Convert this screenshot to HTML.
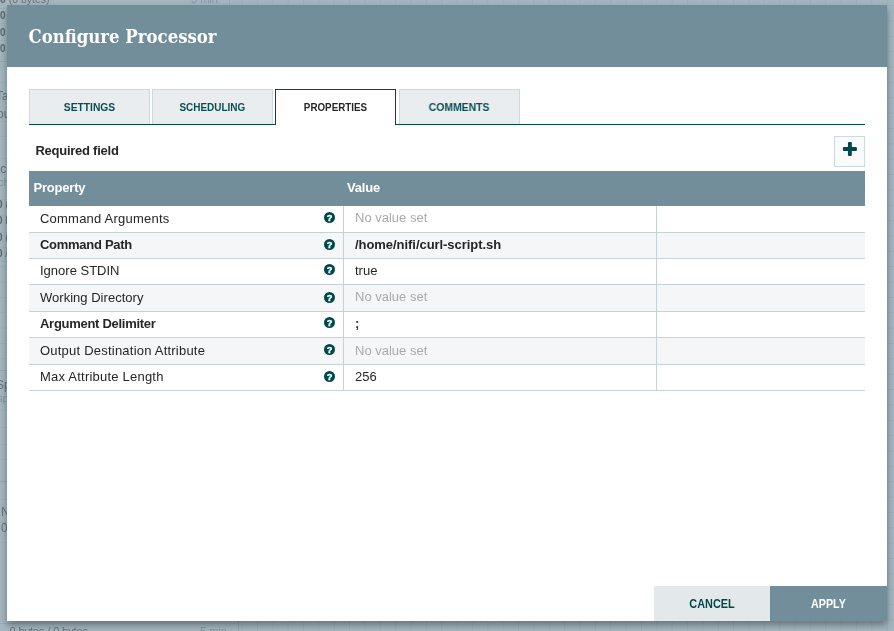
<!DOCTYPE html>
<html lang="en">
<head>
<meta charset="utf-8">
<title>Configure Processor</title>
<style>
*{box-sizing:border-box;margin:0;padding:0}
html,body{width:894px;height:631px;overflow:hidden}
body{position:relative;background:#a3b6bf;font-family:"Liberation Sans",sans-serif;color:#262626;
 background-image:linear-gradient(to right,rgba(100,125,138,.13) 1px,transparent 1px),linear-gradient(to bottom,rgba(100,125,138,.13) 1px,transparent 1px);
 background-size:15.37px 15.37px;background-position:11.2px 5.1px}
.abs{position:absolute}
.pp{will-change:transform;position:absolute;background:#a4b6bf;overflow:hidden}
.pp i{position:absolute;left:0;right:0;height:1px;background:#93a7b1}
.pp span{position:absolute;white-space:nowrap;font-size:10px;line-height:12px;color:#66737b}
.pp b{color:#5b656c}
.pp .lt{color:#8097a3}
#dialog{will-change:transform;left:7px;top:5px;width:880px;height:616px;background:#fff;box-shadow:0 4px 7px rgba(0,0,0,.36)}
#hdr{left:0;top:0;width:880px;height:61.7px;background:#728e9b}
#title{left:21.5px;top:19px;font-family:"DejaVu Serif Condensed","DejaVu Serif","Liberation Serif",serif;font-stretch:condensed;font-weight:bold;font-size:18.4px;line-height:26px;color:#fff;white-space:nowrap}
.tab{top:84.1px;width:121px;height:34.7px;background:#e9edf0;border:1.1px solid #ccdadb;border-bottom:none;color:#0b4e50;font-weight:bold;font-size:11px;line-height:35px;text-align:center;text-transform:uppercase;white-space:nowrap}
.tab span,.btn span{display:inline-block}
.tab.sel{background:#fff;border-color:#004849;color:#262626;height:35.85px}
#tabline{left:22px;top:118.8px;width:836px;height:1.15px;background:#004849}
#req{left:28.4px;top:137.5px;font-weight:bold;font-size:13px;line-height:16px;white-space:nowrap;letter-spacing:-.25px}
#add{left:827.2px;top:131.1px;width:30.7px;height:30.7px;background:#f9fafb;border:1px solid #ccdadb}
#add svg{position:absolute;left:-1px;top:-1px}
#thead{left:22px;top:166px;width:836px;height:35px;background:#728e9b;color:#fff;font-weight:bold;font-size:13px;line-height:35px}
#thead span{position:absolute;top:-1.2px;white-space:nowrap;letter-spacing:-.2px}
.row{left:22px;width:836px;height:26.28px;border-bottom:1.05px solid #c7d2d7;font-size:13px;white-space:nowrap}
.row.alt{background:#f4f6f7}
.row .n{position:absolute;left:11px;top:-.7px;line-height:25px;letter-spacing:.22px}
.row .v{position:absolute;left:326px;top:-.6px;line-height:24px}
.row .v.unset{color:#aaa}
.row .b{font-weight:bold;letter-spacing:-.28px}
.row .v.b{letter-spacing:-.05px}
.row .s1,.row .s2{position:absolute;top:0;bottom:0;width:1px;background:#c7d2d7}
.row .s1{left:314px}.row .s2{left:627px}
.row svg{position:absolute;left:295.05px;top:5.45px}
.btn{top:581px;height:35px;line-height:35px;text-align:center;font-weight:bold;font-size:12px;text-transform:uppercase}
#cancel{left:647px;width:116px;background:#e3e8eb;color:#004849}
#apply{left:763px;width:117px;background:#728e9b;color:#fff}
</style>
</head>
<body>
<div class="pp" style="left:0;top:0;width:230px;height:62px;border-right:1px solid #94a8b2">
  <span style="left:0;top:-7px;font-size:10.5px"><b>0</b> (0 bytes)</span><span class="lt" style="left:191px;top:-7px;font-size:11px">5 min</span>
  <span style="left:0;top:9.5px"><b>0</b></span><span style="left:0;top:26.5px"><b>0</b></span><span style="left:0;top:42.5px"><b>0</b></span>
  <i style="top:7.5px;opacity:.5"></i><i style="top:23px;opacity:.5"></i><i style="top:40px;opacity:.5"></i><i style="top:61px"></i>
</div>
<div class="pp" style="left:0;top:85px;width:8px;height:180px">
  <span style="left:-4px;top:5px;font-size:12px">Ta</span><span style="left:-3px;top:23px;font-size:12px">ou</span>
  <span style="left:-3px;top:78px;font-size:12px">tc</span><span class="lt" style="left:-2px;top:91px;font-size:11px">ch</span>
  <span style="left:-3px;top:114px"><b>0</b> (0 bytes)</span><span style="left:-3px;top:130px"><b>0</b> bytes</span><span style="left:-3px;top:147px"><b>0</b> (0 bytes)</span><span style="left:-3px;top:163px"><b>0</b> / 00:00</span>
  <i style="top:35.7px;opacity:.5"></i><i style="top:50.7px;opacity:.5"></i><i style="top:73.0px;opacity:.5"></i><i style="top:114.0px;opacity:.5"></i><i style="top:129.6px;opacity:.5"></i><i style="top:146.5px;opacity:.5"></i><i style="top:162.0px;opacity:.5"></i><i style="top:175.7px;opacity:.5"></i>
</div>
<div class="pp" style="left:0;top:370px;width:8px;height:261px;border-top:1px solid #93a7b1">
  <span style="left:-4px;top:8px;font-size:12px">Sp</span><span class="lt" style="left:-3px;top:21px;font-size:11px">sp</span>
  <span style="left:1px;top:135px;font-size:12px">N</span><span style="left:1px;top:151px;font-size:12px">0</span>
  <span style="left:-3px;top:203px;font-size:12px">Lo</span><span class="lt" style="left:-3px;top:216px;font-size:11px">Lo</span>
  <i style="top:39.0px;opacity:0.5"></i><i style="top:55.8px;opacity:0.5"></i><i style="top:72.5px;opacity:0.5"></i><i style="top:88.3px;opacity:0.5"></i><i style="top:109.7px;opacity:1"></i><i style="top:128.3px;opacity:0.5"></i><i style="top:150.7px;opacity:0.5"></i><i style="top:170.5px;opacity:0.5"></i><i style="top:192.2px;opacity:0.5"></i>
</div>
<div class="pp" style="left:0;top:560px;width:239px;height:71px;border-right:1px solid #8fa3ad">
  <span style="left:9.5px;top:65px;font-size:11px;letter-spacing:-.1px">0 bytes / 0 bytes</span><span class="lt" style="left:200px;top:65px;font-size:11px">5 min</span>
  <i style="top:63px;opacity:.6"></i>
</div>
<div id="dialog" class="abs">
  <div id="hdr" class="abs"></div>
  <div id="title" class="abs">Configure Processor</div>
  <div class="abs tab" style="left:22.2px;width:120.7px"><span style="transform:scaleX(.934)">Settings</span></div>
  <div class="abs tab" style="left:145px;width:121.1px"><span style="transform:scaleX(.905)">Scheduling</span></div>
  <div id="tabline" class="abs"></div>
  <div class="abs tab sel" style="left:268px;width:121px"><span style="transform:scaleX(.891)">Properties</span></div>
  <div class="abs tab" style="left:391.95px;width:120.9px"><span style="transform:scaleX(.947)">Comments</span></div>
  <div id="req" class="abs">Required field</div>
  <div id="add" class="abs"><svg width="31" height="31" viewBox="0 0 31 31"><rect x="8.9" y="11.1" width="14" height="3.9" rx="1" fill="#004849"/><rect x="13.95" y="6.05" width="3.9" height="14" rx="1" fill="#004849"/></svg></div>
  <div id="thead" class="abs"><span style="left:4.5px">Property</span><span style="left:318px">Value</span></div>
  <div class="abs row" style="top:200.90px;height:26.97px"><span class="n" style="top:0.00px">Command Arguments</span><svg style="top:6.25px" width="11"  height="11" viewBox="0 0 11 11"><circle cx="5.5" cy="5.5" r="5.5" fill="#004849"/><text x="5.55" y="9" text-anchor="middle" font-family="Liberation Sans, sans-serif" font-weight="bold" font-size="9.3" fill="#fff" stroke="#fff" stroke-width=".4">?</text></svg><i class="s1"></i><span class="v unset" style="top:0.10px">No value set</span><i class="s2"></i></div>
  <div class="abs row alt" style="top:227.87px;height:26.00px"><span class="n b" style="top:-0.70px">Command Path</span><svg style="top:5.90px" width="11"  height="11" viewBox="0 0 11 11"><circle cx="5.5" cy="5.5" r="5.5" fill="#004849"/><text x="5.55" y="9" text-anchor="middle" font-family="Liberation Sans, sans-serif" font-weight="bold" font-size="9.3" fill="#fff" stroke="#fff" stroke-width=".4">?</text></svg><i class="s1"></i><span class="v b" style="top:0.10px">/home/nifi/curl-script.sh</span><i class="s2"></i></div>
  <div class="abs row" style="top:253.87px;height:26.25px"><span class="n" style="letter-spacing:0;top:-0.41px">Ignore STDIN</span><svg style="top:5.59px" width="11"  height="11" viewBox="0 0 11 11"><circle cx="5.5" cy="5.5" r="5.5" fill="#004849"/><text x="5.55" y="9" text-anchor="middle" font-family="Liberation Sans, sans-serif" font-weight="bold" font-size="9.3" fill="#fff" stroke="#fff" stroke-width=".4">?</text></svg><i class="s1"></i><span class="v" style="top:-0.31px">true</span><i class="s2"></i></div>
  <div class="abs row alt" style="top:280.12px;height:26.65px"><span class="n" style="letter-spacing:.02px;top:0.12px">Working Directory</span><svg style="top:6.57px" width="11"  height="11" viewBox="0 0 11 11"><circle cx="5.5" cy="5.5" r="5.5" fill="#004849"/><text x="5.55" y="9" text-anchor="middle" font-family="Liberation Sans, sans-serif" font-weight="bold" font-size="9.3" fill="#fff" stroke="#fff" stroke-width=".4">?</text></svg><i class="s1"></i><span class="v unset" style="top:-0.08px">No value set</span><i class="s2"></i></div>
  <div class="abs row" style="top:306.77px;height:26.35px"><span class="n b" style="top:-0.55px">Argument Delimiter</span><svg style="top:5.70px" width="11"  height="11" viewBox="0 0 11 11"><circle cx="5.5" cy="5.5" r="5.5" fill="#004849"/><text x="5.55" y="9" text-anchor="middle" font-family="Liberation Sans, sans-serif" font-weight="bold" font-size="9.3" fill="#fff" stroke="#fff" stroke-width=".4">?</text></svg><i class="s1"></i><span class="v b" style="top:-0.15px">;</span><i class="s2"></i></div>
  <div class="abs row alt" style="top:333.12px;height:26.65px"><span class="n" style="top:0.28px">Output Destination Attribute</span><svg style="top:6.23px" width="11"  height="11" viewBox="0 0 11 11"><circle cx="5.5" cy="5.5" r="5.5" fill="#004849"/><text x="5.55" y="9" text-anchor="middle" font-family="Liberation Sans, sans-serif" font-weight="bold" font-size="9.3" fill="#fff" stroke="#fff" stroke-width=".4">?</text></svg><i class="s1"></i><span class="v unset" style="top:0.58px">No value set</span><i class="s2"></i></div>
  <div class="abs row" style="top:359.77px;height:25.95px"><span class="n" style="top:-0.99px">Max Attribute Length</span><svg style="top:5.86px" width="11"  height="11" viewBox="0 0 11 11"><circle cx="5.5" cy="5.5" r="5.5" fill="#004849"/><text x="5.55" y="9" text-anchor="middle" font-family="Liberation Sans, sans-serif" font-weight="bold" font-size="9.3" fill="#fff" stroke="#fff" stroke-width=".4">?</text></svg><i class="s1"></i><span class="v" style="top:-0.19px">256</span><i class="s2"></i></div>
  <div id="cancel" class="abs btn"><span style="transform:translateY(.5px) scaleX(.906)">Cancel</span></div>
  <div id="apply" class="abs btn"><span style="transform:translateY(.5px) scaleX(.892)">Apply</span></div>
</div>
</body>
</html>
